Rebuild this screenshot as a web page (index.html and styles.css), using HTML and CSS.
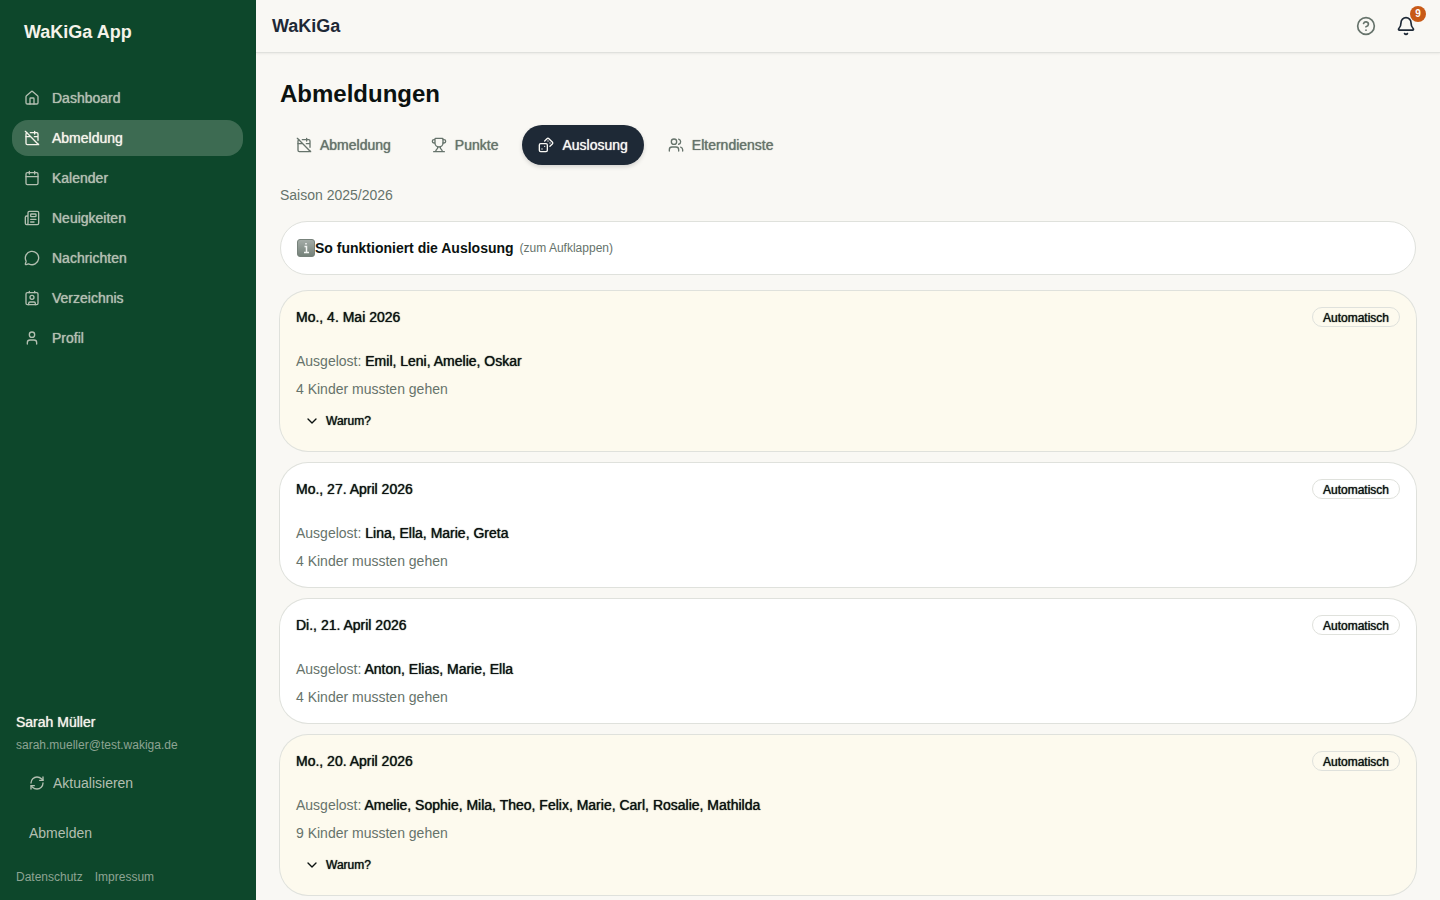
FILE: index.html
```html
<!DOCTYPE html>
<html lang="de">
  <head>
    <meta charset="UTF-8" />
    <meta name="viewport" content="width=device-width, initial-scale=1.0" />
    <title>WaKiGa App</title>
    <link rel="stylesheet" href="styles.css">
  </head>
  <body>
    <svg class="sprite" aria-hidden="true">
      <symbol id="calendar-off" viewBox="0 0 24 24">
        <path d="M4.2 4.2A2 2 0 0 0 3 6v14a2 2 0 0 0 2 2h14a2 2 0 0 0 1.82-1.18" />
        <path d="M21 15.5V6a2 2 0 0 0-2-2H9.5M16 2v4M3 10h7M21 10h-5.5M2 2l20 20" />
      </symbol>
      <symbol id="chevron-down" viewBox="0 0 24 24">
        <path d="m6 9 6 6 6-6" />
      </symbol>
    </svg>

    <aside class="sidebar">
      <div class="brand">WaKiGa App</div>
      <nav class="menu">
        <a href="#">
          <svg class="icon" viewBox="0 0 24 24"><path d="M15 21v-8a1 1 0 0 0-1-1h-4a1 1 0 0 0-1 1v8" /><path d="M3 10a2 2 0 0 1 .709-1.528l7-5.999a2 2 0 0 1 2.582 0l7 5.999A2 2 0 0 1 21 10v9a2 2 0 0 1-2 2H5a2 2 0 0 1-2-2z" /></svg>
          Dashboard
        </a>
        <a href="#" class="active">
          <svg class="icon"><use href="#calendar-off" /></svg>
          Abmeldung
        </a>
        <a href="#">
          <svg class="icon" viewBox="0 0 24 24"><path d="M8 2v4M16 2v4M3 10h18" /><rect width="18" height="18" x="3" y="4" rx="2" /></svg>
          Kalender
        </a>
        <a href="#">
          <svg class="icon" viewBox="0 0 24 24"><path d="M15 18h-5M18 14h-8" /><path d="M4 22h16a2 2 0 0 0 2-2V4a2 2 0 0 0-2-2H8a2 2 0 0 0-2 2v16a2 2 0 0 1-4 0v-9a2 2 0 0 1 2-2h2" /><rect width="8" height="4" x="10" y="6" rx="1" /></svg>
          Neuigkeiten
        </a>
        <a href="#">
          <svg class="icon" viewBox="0 0 24 24"><path d="M2.992 16.342a2 2 0 0 1 .094 1.167l-1.065 3.29a1 1 0 0 0 1.236 1.168l3.413-.998a2 2 0 0 1 1.099.092 10 10 0 1 0-4.777-4.719" /></svg>
          Nachrichten
        </a>
        <a href="#">
          <svg class="icon" viewBox="0 0 24 24"><path d="M16 2v2M8 2v2M7 22v-2a2 2 0 0 1 2-2h6a2 2 0 0 1 2 2v2" /><circle cx="12" cy="11" r="3" /><rect width="18" height="18" x="3" y="4" rx="2" /></svg>
          Verzeichnis
        </a>
        <a href="#">
          <svg class="icon" viewBox="0 0 24 24"><circle cx="12" cy="7" r="4" /><path d="M19 21v-2a4 4 0 0 0-4-4H9a4 4 0 0 0-4 4v2" /></svg>
          Profil
        </a>
      </nav>
      <div class="account">
        <p class="account-name">Sarah Müller</p>
        <p class="account-mail">sarah.mueller@test.wakiga.de</p>
        <div class="account-actions">
          <button type="button">
            <svg class="icon" viewBox="0 0 24 24"><path d="M3 12a9 9 0 0 1 9-9 9.75 9.75 0 0 1 6.74 2.74L21 8" /><path d="M21 3v5h-5M21 12a9 9 0 0 1-9 9 9.75 9.75 0 0 1-6.74-2.74L3 16" /><path d="M8 16H3v5" /></svg>
            Aktualisieren
          </button>
          <button type="button">Abmelden</button>
        </div>
        <div class="legal">
          <a href="#">Datenschutz</a>
          <a href="#">Impressum</a>
        </div>
      </div>
    </aside>

    <div class="page">
      <header class="topbar">
        <span class="topbar-title">WaKiGa</span>
        <div class="topbar-actions">
          <button type="button" class="help" aria-label="Hilfe">
            <svg class="icon" viewBox="0 0 24 24"><circle cx="12" cy="12" r="10" /><path d="M9.09 9a3 3 0 0 1 5.83 1c0 2-3 3-3 3M12 17h.01" /></svg>
          </button>
          <button type="button" class="bell" aria-label="Benachrichtigungen">
            <svg class="icon" viewBox="0 0 24 24"><path d="M10.268 21a2 2 0 0 0 3.464 0" /><path d="M3.262 15.326A1 1 0 0 0 4 17h16a1 1 0 0 0 .74-1.673C19.41 13.956 18 12.499 18 8A6 6 0 0 0 6 8c0 4.499-1.411 5.956-2.738 7.326" /></svg>
            <span class="count">9</span>
          </button>
        </div>
      </header>

      <main>
        <h1>Abmeldungen</h1>
        <nav class="tabs">
          <a href="#">
            <svg class="icon"><use href="#calendar-off" /></svg>
            Abmeldung
          </a>
          <a href="#">
            <svg class="icon" viewBox="0 0 24 24"><path d="M10 14.66v1.626a2 2 0 0 1-.976 1.696A5 5 0 0 0 7 21.978M14 14.66v1.626a2 2 0 0 0 .976 1.696A5 5 0 0 1 17 21.978M18 9h1.5a1 1 0 0 0 0-5H18M4 22h16" /><path d="M6 9a6 6 0 0 0 12 0V3a1 1 0 0 0-1-1H7a1 1 0 0 0-1 1zM6 9H4.5a1 1 0 0 1 0-5H6" /></svg>
            Punkte
          </a>
          <a href="#" class="active">
            <svg class="icon" viewBox="0 0 24 24"><rect width="12" height="12" x="2" y="10" rx="2" /><path d="m17.92 14 3.5-3.5a2.24 2.24 0 0 0 0-3l-5-4.92a2.24 2.24 0 0 0-3 0L10 6M6 18h.01M10 14h.01M15 6h.01M18 9h.01" /></svg>
            Auslosung
          </a>
          <a href="#">
            <svg class="icon" viewBox="0 0 24 24"><path d="M16 21v-2a4 4 0 0 0-4-4H6a4 4 0 0 0-4 4v2M16 3.128a4 4 0 0 1 0 7.744M22 21v-2a4 4 0 0 0-3-3.87" /><circle cx="9" cy="7" r="4" /></svg>
            Elterndienste
          </a>
        </nav>
        <p class="season">Saison 2025/2026</p>

        <details class="info">
          <summary>
            <svg class="info-icon" viewBox="0 0 18 18">
              <defs>
                <linearGradient id="tile" x1="0" y1="0" x2="0" y2="1">
                  <stop offset="0" stop-color="#a5ada8" />
                  <stop offset="1" stop-color="#738078" />
                </linearGradient>
              </defs>
              <rect x="0.5" y="0.5" width="17" height="17" rx="2.5" fill="url(#tile)" stroke="#77827b" />
              <path d="M7.5 7.5h2v6M7 13.5h5M9 4v1.5" fill="none" stroke="#f3f5f3" stroke-width="1.5" />
            </svg>
            <strong>So funktioniert die Auslosung</strong>
            <span class="hint">(zum Aufklappen)</span>
          </summary>
          <p>Die Kinder werden automatisch ausgelost.</p>
        </details>

        <div class="draws">
          <section class="draw highlight">
            <div class="draw-head">
              <h2>Mo., 4. Mai 2026</h2>
              <span class="badge">Automatisch</span>
            </div>
            <p>Ausgelost: <span class="names">Emil, Leni, Amelie, Oskar</span></p>
            <p>4 Kinder mussten gehen</p>
            <button type="button" class="why">
              <svg class="icon"><use href="#chevron-down" /></svg>
              Warum?
            </button>
          </section>
          <section class="draw">
            <div class="draw-head">
              <h2>Mo., 27. April 2026</h2>
              <span class="badge">Automatisch</span>
            </div>
            <p>Ausgelost: <span class="names">Lina, Ella, Marie, Greta</span></p>
            <p>4 Kinder mussten gehen</p>
          </section>
          <section class="draw">
            <div class="draw-head">
              <h2>Di., 21. April 2026</h2>
              <span class="badge">Automatisch</span>
            </div>
            <p>Ausgelost: <span class="names">Anton, Elias, Marie, Ella</span></p>
            <p>4 Kinder mussten gehen</p>
          </section>
          <section class="draw highlight">
            <div class="draw-head">
              <h2>Mo., 20. April 2026</h2>
              <span class="badge">Automatisch</span>
            </div>
            <p>Ausgelost: <span class="names">Amelie, Sophie, Mila, Theo, Felix, Marie, Carl, Rosalie, Mathilda</span></p>
            <p>9 Kinder mussten gehen</p>
            <button type="button" class="why">
              <svg class="icon"><use href="#chevron-down" /></svg>
              Warum?
            </button>
          </section>
        </div>
      </main>
    </div>
  </body>
</html>
```

FILE: styles.css
```css
* {
  margin: 0;
  padding: 0;
  box-sizing: border-box;
}

body {
  display: flex;
  height: 100vh;
  overflow: hidden;
  font-family: "Liberation Sans", Arial, sans-serif;
  font-size: 14px;
  line-height: 20px;
  color: #0b1210;
  background: #f9f8f4;
}

a {
  color: inherit;
  text-decoration: none;
}

button {
  font: inherit;
  color: inherit;
  background: none;
  border: none;
  cursor: pointer;
}

.sprite {
  position: absolute;
  width: 0;
  height: 0;
}

.icon {
  width: 16px;
  height: 16px;
  flex-shrink: 0;
  fill: none;
  stroke: currentColor;
  stroke-width: 2;
  stroke-linecap: round;
  stroke-linejoin: round;
}

/* medium weight */
.menu a,
.tabs a,
.account-name,
.draw h2,
.names,
.badge,
.why {
  text-shadow: 0 0 1px currentColor;
}

.sidebar {
  display: flex;
  flex-direction: column;
  width: 256px;
  flex-shrink: 0;
  color: #f5f3ea;
  background: #0d472b;
}

.brand {
  padding: 18px 24px;
  font-size: 18px;
  line-height: 28px;
  font-weight: bold;
}

.menu {
  display: flex;
  flex-direction: column;
  gap: 4px;
  padding: 16px 13px 16px 12px;
}

.menu a {
  display: flex;
  align-items: center;
  gap: 12px;
  height: 36px;
  padding: 0 12px;
  border-radius: 16px;
  color: #b3bfb1;
}

.menu a.active {
  color: #f5f3ea;
  background: #3d6b52;
}

.account {
  margin-top: auto;
  padding: 0 16px 13px;
}

.account-mail {
  margin-top: 5px;
  font-size: 12px;
  line-height: 16px;
  color: #8da493;
}

.account-actions {
  display: flex;
  flex-direction: column;
  gap: 14px;
  margin-top: 12px;
}

.account-actions button {
  display: flex;
  align-items: center;
  gap: 8px;
  height: 36px;
  padding: 0 13px;
  color: #b3bfb1;
}

.legal {
  display: flex;
  gap: 12px;
  margin-top: 16px;
  font-size: 12px;
  color: #8da493;
}

.page {
  flex: 1;
  min-width: 0;
  display: flex;
  flex-direction: column;
}

.topbar {
  display: flex;
  align-items: center;
  justify-content: space-between;
  flex-shrink: 0;
  height: 53px;
  padding: 0 16px;
  border-bottom: 1px solid #e0e1dd;
  box-shadow: 0 1px 2px rgba(0, 0, 0, 0.06);
}

.topbar-title {
  font-size: 18px;
  line-height: 28px;
  font-weight: bold;
  color: #1e2936;
}

.topbar-actions {
  display: flex;
  gap: 4px;
}

.topbar-actions button {
  position: relative;
  display: flex;
  align-items: center;
  justify-content: center;
  width: 36px;
  height: 40px;
}

.topbar-actions .icon {
  width: 20px;
  height: 20px;
}

.topbar-actions .help {
  color: #66736b;
}

.topbar-actions .bell {
  color: #1e2936;
}

.count {
  position: absolute;
  top: 0;
  right: -2px;
  width: 16px;
  height: 16px;
  border-radius: 50%;
  font-size: 10px;
  line-height: 16px;
  font-weight: bold;
  text-align: center;
  color: #fff;
  background: #c85a17;
}

main {
  flex: 1;
  min-height: 0;
  overflow: hidden;
  padding: 25px 24px;
}

h1 {
  font-size: 24px;
  line-height: 32px;
}

.tabs {
  display: flex;
  gap: 8px;
  margin-top: 15px;
}

.tabs a {
  display: flex;
  align-items: center;
  gap: 8px;
  height: 40px;
  padding: 0 16px;
  border-radius: 20px;
  color: #66736b;
}

.tabs a.active {
  color: #f9f8f4;
  background: #1e2936;
  box-shadow: 0 2px 4px rgba(0, 0, 0, 0.15);
}

.season {
  margin-top: 20px;
  color: #66736b;
}

.info {
  margin-top: 16px;
  padding: 16px;
  border: 1px solid #dfe1dc;
  border-radius: 27px;
  background: #fff;
}

.info summary {
  display: flex;
  align-items: center;
  list-style: none;
  cursor: pointer;
}

.info-icon {
  width: 18px;
  height: 18px;
}

.hint {
  margin-left: 6px;
  font-size: 12px;
  color: #66736b;
}

.draws {
  display: flex;
  flex-direction: column;
  gap: 12px;
  margin-top: 16px;
}

.draw {
  padding: 16px;
  border-radius: 28px;
  color: #66736b;
  background: #fff;
  box-shadow: 0 0 0 1px #dfe1dc;
}

.draw.highlight {
  background: #fdfaee;
}

.draw-head {
  display: flex;
  align-items: center;
  justify-content: space-between;
  margin-bottom: 24px;
  color: #0b1210;
}

.draw h2 {
  font-size: 14px;
  font-weight: normal;
}

.draw p + p {
  margin-top: 8px;
}

.names {
  color: #0b1210;
}

.badge {
  min-width: 88px;
  height: 20px;
  padding: 0 8px;
  border: 1px solid #dfe1dc;
  border-radius: 10px;
  font-size: 12px;
  line-height: 20px;
  text-align: center;
}

.why {
  display: flex;
  align-items: center;
  gap: 6px;
  height: 28px;
  margin-top: 8px;
  padding: 0 8px;
  font-size: 12px;
  color: #0b1210;
}
```
